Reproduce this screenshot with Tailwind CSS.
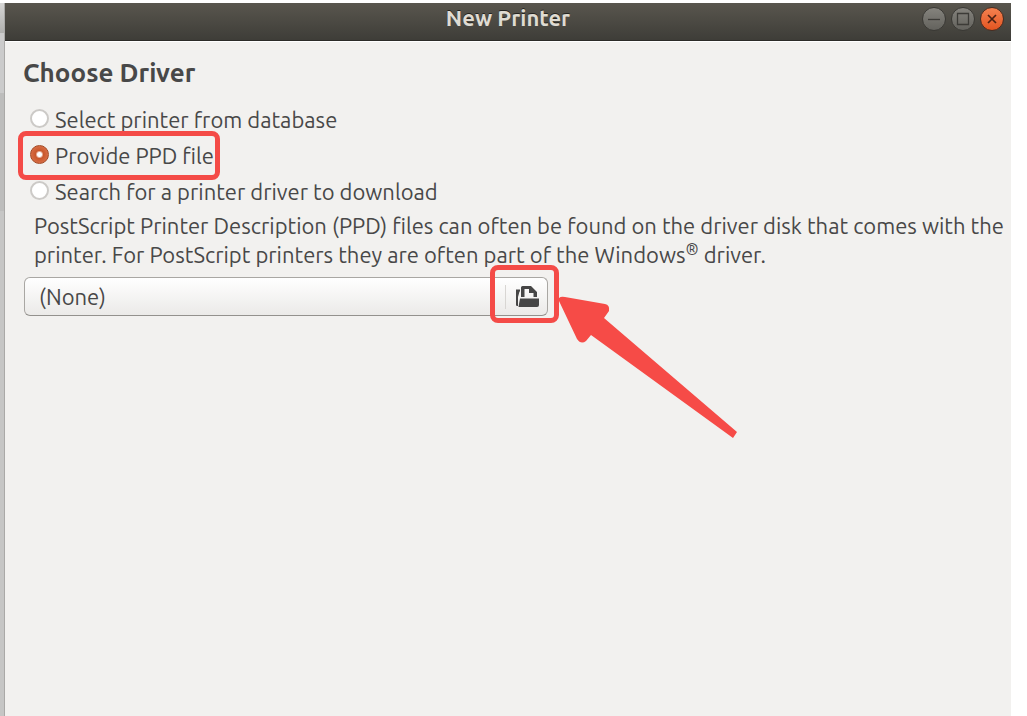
<!DOCTYPE html>
<html lang="en">
<head>
<meta charset="utf-8">
<meta name="viewport" content="width=device-width, initial-scale=1">
<title>New Printer</title>
<script src="https://cdn.jsdelivr.net/npm/@tailwindcss/browser@4"></script>
</head>
<body class="min-h-screen flex bg-white pt-[3px] pr-4 font-['Ubuntu','Noto_Sans',sans-serif] text-[22px] text-[#484848]">
  <div class="w-[5px] shrink-0 flex flex-col border-r border-[#aaa9a7]">
    <div class="h-[30px] bg-linear-to-b from-[#d6d6d5] to-[#b0b0ae]"></div>
    <div class="h-[60px] bg-[#cbcbcb]"></div>
    <div class="h-[118px] bg-[#bdbdbc]"></div>
    <div class="grow bg-[#c6c6c5]"></div>
  </div>
  <div class="grow min-w-0 flex flex-col bg-[#f2f1ef]">
    <header class="h-[38px] grid grid-cols-[1fr_auto_1fr] items-center bg-linear-to-b from-[#59564e] to-[#3e3d38] border-b border-[#2c2b28] px-[7px] pb-[6px]">
      <h1 class="col-start-2 pb-[2px] font-bold text-[22px] leading-6 text-[#dfdbd2] text-shadow-[0_-1px_0_#24231f]">New Printer</h1>
      <div class="flex justify-end gap-[5px]">
        <button type="button" aria-label="Minimize" class="size-6 rounded-full border border-[#3a3935] bg-linear-to-b from-[#85837d] to-[#63625d]">
          <svg viewBox="0 0 22 22" class="size-full" fill="none" stroke="#3c3b37" stroke-width="1.3"><path d="M5 11.500h12"/></svg>
        </button>
        <button type="button" aria-label="Maximize" class="size-6 rounded-full border border-[#3a3935] bg-linear-to-b from-[#85837d] to-[#63625d]">
          <svg viewBox="0 0 22 22" class="size-full" fill="none" stroke="#3c3b37" stroke-width="1.3"><path d="M5.500 5.500h11v11h-11z"/></svg>
        </button>
        <button type="button" aria-label="Close" class="size-6 rounded-full border border-[#4a2c20] bg-linear-to-b from-[#f4814f] to-[#e2541f]">
          <svg viewBox="0 0 22 22" class="size-full" fill="none" stroke="#4a2113" stroke-width="1.7"><path d="M7 7l8 8M15 7l-8 8"/></svg>
        </button>
      </div>
    </header>
    <main class="border-t border-white pl-[18px] pr-2 pt-[13px]">
      <h2 class="font-bold text-[26px] leading-9">Choose Driver</h2>
      <div role="radiogroup" aria-label="Choose Driver" class="pt-[10px] pl-[7px]">
        <div class="h-9 flex items-center gap-[6px]">
          <input id="db" type="radio" name="driver" class="appearance-none size-[19px] mb-[2px] rounded-full border-2 border-[#cccac7] bg-white">
          <label for="db">Select printer from database</label>
        </div>
        <div class="relative h-9 w-fit flex items-center gap-[6px]">
          <input id="ppd" type="radio" name="driver" checked class="appearance-none size-[19px] mb-[2px] rounded-full border border-[#a34a24] bg-[radial-gradient(circle,#fff_2px,#c9582c_4px,#d96f47_9px)]">
          <label for="ppd">Provide PPD file</label>
          <div class="absolute -left-3 -top-[6px] w-[202px] h-[49px] rounded-lg border-5 border-[#f44b47] pointer-events-none"></div>
        </div>
        <div class="h-9 flex items-center gap-[6px]">
          <input id="search" type="radio" name="driver" class="appearance-none size-[19px] mb-[2px] rounded-full border-2 border-[#cccac7] bg-white">
          <label for="search">Search for a printer driver to download</label>
        </div>
      </div>
      <p class="pl-[11px] pt-[2px] -mr-2 leading-[29px]">PostScript Printer Description (PPD) files can often be found on the driver disk that comes with the<br>printer. For PostScript printers they are often part of the Windows<sup class="text-[16px]">®</sup> driver.</p>
      <div class="relative mt-2 ml-px w-[524px]">
        <button type="button" class="w-full h-[39px] flex items-center rounded-md border border-[#a9a7a3] border-b-[#93918d] bg-linear-to-b from-white to-[#ebeae8] pl-[14px] pr-2 text-left">
          <span class="grow">(None)</span>
          <span class="w-px h-6 bg-[#d8d6d3] mr-[9px]"></span>
          <svg viewBox="0 0 24 24" class="size-6 mb-[2px]" fill="#464646"><path d="M1 5.500h4v2H4.500L3 13v9H2a1.500 1.500 0 0 1-1-1z"/><path fill-rule="evenodd" d="M6 13V3.500Q6 2 7.500 2H16l6 6v5h-3.500V9H14V5H9.500v8z"/><path d="M5 14.500h19V21q0 2-2 2H3.500z"/></svg>
        </button>
        <div class="absolute left-[466px] -top-3 w-[69px] h-[58px] rounded-lg border-5 border-[#f44b47] pointer-events-none"></div>
        <svg viewBox="0 0 180 143" class="absolute left-[535px] top-[19px] w-[180px] h-[143px] pointer-events-none" fill="#f64b47"><path d="M0 2Q2 0 6 1L46 8Q51 9 50 15L45 22L178 136L174 142L32 39L27 45Q22 49 18 43L0 5Z"/></svg>
      </div>
    </main>
  </div>
</body>
</html>
